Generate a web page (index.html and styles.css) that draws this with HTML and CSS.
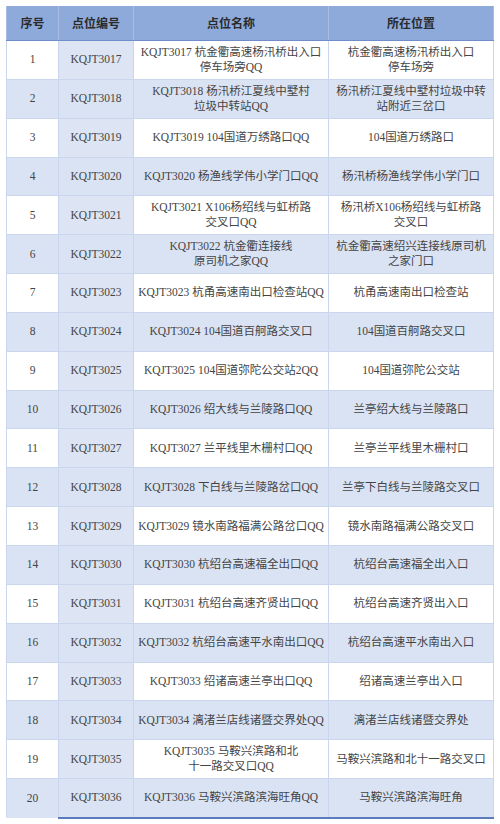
FILE: index.html
```html
<!DOCTYPE html>
<html lang="zh-CN">
<head>
<meta charset="utf-8">
<title>点位表</title>
<link rel="stylesheet" href="styles.css">
</head>
<body>
<table class="sheet">
  <colgroup>
    <col class="c-no"><col class="c-code"><col class="c-name"><col class="c-loc">
  </colgroup>
  <thead>
    <tr><th>序号</th><th>点位编号</th><th>点位名称</th><th>所在位置</th></tr>
  </thead>
  <tbody>
    <tr><td>1</td><td class="code">KQJT3017</td><td>KQJT3017 杭金衢高速杨汛桥出入口<br>停车场旁QQ</td><td>杭金衢高速杨汛桥出入口<br>停车场旁</td></tr>
    <tr><td>2</td><td class="code">KQJT3018</td><td>KQJT3018 杨汛桥江夏线中墅村<br>垃圾中转站QQ</td><td>杨汛桥江夏线中墅村垃圾中转<br>站附近三岔口</td></tr>
    <tr><td>3</td><td class="code">KQJT3019</td><td>KQJT3019 104国道万绣路口QQ</td><td>104国道万绣路口</td></tr>
    <tr><td>4</td><td class="code">KQJT3020</td><td>KQJT3020 杨渔线学伟小学门口QQ</td><td>杨汛桥杨渔线学伟小学门口</td></tr>
    <tr><td>5</td><td class="code">KQJT3021</td><td>KQJT3021 X106杨绍线与虹桥路<br>交叉口QQ</td><td>杨汛桥X106杨绍线与虹桥路<br>交叉口</td></tr>
    <tr><td>6</td><td class="code">KQJT3022</td><td>KQJT3022 杭金衢连接线<br>原司机之家QQ</td><td>杭金衢高速绍兴连接线原司机<br>之家门口</td></tr>
    <tr><td>7</td><td class="code">KQJT3023</td><td>KQJT3023 杭甬高速南出口检查站QQ</td><td>杭甬高速南出口检查站</td></tr>
    <tr><td>8</td><td class="code">KQJT3024</td><td>KQJT3024 104国道百舸路交叉口</td><td>104国道百舸路交叉口</td></tr>
    <tr><td>9</td><td class="code">KQJT3025</td><td>KQJT3025 104国道弥陀公交站2QQ</td><td>104国道弥陀公交站</td></tr>
    <tr><td>10</td><td class="code">KQJT3026</td><td>KQJT3026 绍大线与兰陵路口QQ</td><td>兰亭绍大线与兰陵路口</td></tr>
    <tr><td>11</td><td class="code">KQJT3027</td><td>KQJT3027 兰平线里木栅村口QQ</td><td>兰亭兰平线里木栅村口</td></tr>
    <tr><td>12</td><td class="code">KQJT3028</td><td>KQJT3028 下白线与兰陵路岔口QQ</td><td>兰亭下白线与兰陵路交叉口</td></tr>
    <tr><td>13</td><td class="code">KQJT3029</td><td>KQJT3029 镜水南路福满公路岔口QQ</td><td>镜水南路福满公路交叉口</td></tr>
    <tr><td>14</td><td class="code">KQJT3030</td><td>KQJT3030 杭绍台高速福全出口QQ</td><td>杭绍台高速福全出入口</td></tr>
    <tr><td>15</td><td class="code">KQJT3031</td><td>KQJT3031 杭绍台高速齐贤出口QQ</td><td>杭绍台高速齐贤出入口</td></tr>
    <tr><td>16</td><td class="code">KQJT3032</td><td>KQJT3032 杭绍台高速平水南出口QQ</td><td>杭绍台高速平水南出入口</td></tr>
    <tr><td>17</td><td class="code">KQJT3033</td><td>KQJT3033 绍诸高速兰亭出口QQ</td><td>绍诸高速兰亭出入口</td></tr>
    <tr><td>18</td><td class="code">KQJT3034</td><td>KQJT3034 漓渚兰店线诸暨交界处QQ</td><td>漓渚兰店线诸暨交界处</td></tr>
    <tr><td>19</td><td class="code">KQJT3035</td><td>KQJT3035 马鞍兴滨路和北<br>十一路交叉口QQ</td><td>马鞍兴滨路和北十一路交叉口</td></tr>
    <tr><td>20</td><td class="code">KQJT3036</td><td>KQJT3036 马鞍兴滨路滨海旺角QQ</td><td>马鞍兴滨路滨海旺角</td></tr>
  </tbody>
</table>
</body>
</html>
```

FILE: styles.css
```css
html, body {
  margin: 0;
  padding: 0;
  background: #ffffff;
}

body {
  padding: 6px 0 0 6px;
  font-family: "Liberation Serif", "Noto Sans CJK SC", serif;
  color: #444444;
}

.sheet {
  width: 487px;
  border-collapse: collapse;
  table-layout: fixed;
  font-size: 11.5px;
}

.c-no { width: 52px; }
.c-code { width: 75px; }
.c-name { width: 195px; }
.c-loc { width: 165px; }

.sheet th {
  height: 34px;
  padding: 0;
  background: #8eaadb;
  color: #2b2b2b;
  font-weight: bold;
  font-size: 12px;
  text-align: center;
  vertical-align: middle;
  border-left: 1px solid #a9bde4;
  border-right: 1px solid #a9bde4;
  border-bottom: 1px solid #6f8ccb;
}

.sheet td {
  height: 37.85px;
  padding: 0 2px;
  text-align: center;
  vertical-align: middle;
  line-height: 15px;
  white-space: nowrap;
  border: 1px solid #c9d6ee;
  background: #ffffff;
}

.sheet tbody tr:nth-child(even) td {
  background: #dae3f3;
}

.sheet td.code {
  background: #dde5f4;
}

.sheet tbody tr:last-child td {
  border-bottom: 1px solid #dae3f3;
}

.sheet tbody tr:last-child td + td {
  border-bottom: 2px solid #5b7bbf;
}
```
